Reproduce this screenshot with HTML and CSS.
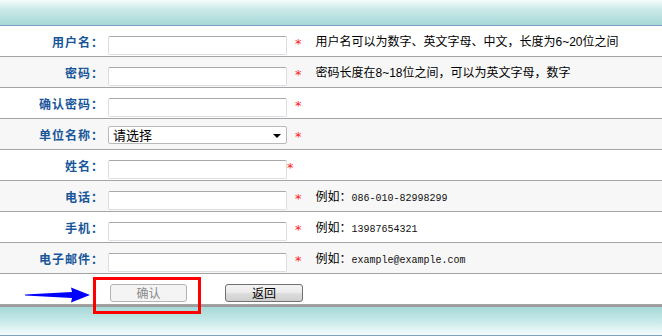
FILE: index.html
```html
<!DOCTYPE html>
<html>

<head>
    <title>用户注册</title>
    <link rel="stylesheet" href="styles.css">
</head>

<body>
    <div class="top"></div>
    <form class="form">
        <div class="row">
            <label class="name">用户名：</label>
            <input type="text" class="text" />
            <span class="req">*</span>
            <span class="tip">用户名可以为数字、英文字母、中文，长度为6~20位之间</span>
        </div>
        <div class="row">
            <label class="name">密码：</label>
            <input type="password" class="text" />
            <span class="req">*</span>
            <span class="tip">密码长度在8~18位之间，可以为英文字母，数字</span>
        </div>
        <div class="row">
            <label class="name">确认密码：</label>
            <input type="password" class="text" />
            <span class="req">*</span>
        </div>
        <div class="row">
            <label class="name">单位名称：</label>
            <span class="pick">
                <select class="unit">
                    <option>请选择</option>
                </select>
            </span>
            <span class="req">*</span>
        </div>
        <div class="row">
            <label class="name">姓名：</label>
            <input type="text" class="text" />
            <span class="req tight">*</span>
        </div>
        <div class="row">
            <label class="name">电话：</label>
            <input type="text" class="text" />
            <span class="req">*</span>
            <span class="tip">例如：<span class="mono">086-010-82998299</span></span>
        </div>
        <div class="row">
            <label class="name">手机：</label>
            <input type="text" class="text" />
            <span class="req">*</span>
            <span class="tip">例如：<span class="mono">13987654321</span></span>
        </div>
        <div class="row">
            <label class="name">电子邮件：</label>
            <input type="text" class="text" />
            <span class="req">*</span>
            <span class="tip">例如：<span class="mono">example@example.com</span></span>
        </div>
        <div class="row act">
            <!-- 提示箭头 -->
            <svg class="arrow" width="66" height="16" viewBox="0 0 66 16">
                <polygon points="0,7.4 47,5 46,0.6 65,8 46,15.4 47,11 0,8.6" fill="#0000ff" />
            </svg>
            <button type="button" class="btn off" disabled>确认</button>
            <button type="button" class="btn">返回</button>
            <!-- 标记框 -->
            <div class="mark"></div>
        </div>
    </form>
    <div class="bottom"></div>
</body>

</html>
```

FILE: styles.css
```css
body {
    margin: 0;
    font-family: "Liberation Sans", "Noto Sans CJK SC", sans-serif;
    font-size: 12px;
    color: #000;
    background: #fff;
}

.top {
    height: 25px;
    background: linear-gradient(#f6fcfc, #cdeaea 35%, #a6d8d8);
    border-bottom: 1px solid #7fa2c3;
}

.row {
    display: flex;
    align-items: flex-start;
    height: 30px;
    border-bottom: 1px solid #a4a4a4;
    background: #fff;
}

.row:nth-child(even) {
    background: #f7f7f7;
}

.name {
    width: 104px;
    margin-top: 9px;
    line-height: 14px;
    text-align: right;
    font-family: "Noto Sans CJK SC", sans-serif;
    font-weight: bold;
    letter-spacing: 1px;
    color: #17569a;
}

.text {
    box-sizing: border-box;
    width: 179px;
    height: 19px;
    margin: 10px 0 0 4px;
    padding: 0 3px;
    border: 1px solid #dcdde3;
    border-top-color: #a9a9a9;
    border-radius: 2px;
    background: #fff;
    font-size: 12px;
}

.pick {
    position: relative;
    margin: 7px 0 0 4px;
}

.unit {
    appearance: none;
    box-sizing: border-box;
    width: 179px;
    height: 18px;
    padding: 0 0 0 4px;
    border: 1px solid #b9b9b9;
    border-radius: 2px;
    background: #fff;
    font-family: "Noto Sans CJK SC", sans-serif;
    font-size: 13px;
    line-height: 16px;
    color: #000;
}

.pick:after {
    content: "";
    position: absolute;
    right: 6px;
    top: 8px;
    border-left: 4px solid transparent;
    border-right: 4px solid transparent;
    border-top: 4px solid #000;
}

.req {
    margin: 11px 0 0 8px;
    line-height: 13px;
    font-family: "DejaVu Sans", sans-serif;
    font-size: 13px;
    color: #ff1a1a;
}

.req.tight {
    margin-left: 0;
}

.tip {
    margin: 9px 0 0 14px;
    line-height: 14px;
}

.mono {
    font-family: "Liberation Mono", monospace;
    font-size: 10px;
    color: #111;
}

.act {
    position: relative;
    padding-left: 110px;
    gap: 38px;
}

.btn {
    box-sizing: border-box;
    width: 78px;
    height: 18px;
    margin-top: 10px;
    padding: 0;
    border: 1px solid #707070;
    border-radius: 3px;
    background: linear-gradient(#f3f3f3, #ececec 45%, #dcdcdc 55%, #cfcfcf);
    font-family: "Noto Sans CJK SC", sans-serif;
    font-size: 12px;
    line-height: 16px;
    color: #000;
}

.btn.off {
    width: 77px;
    border-color: #b3b3b3;
    background: #f4f4f4;
    color: #8a8a8a;
}

.arrow {
    position: absolute;
    left: 25px;
    top: 13px;
}

.mark {
    position: absolute;
    left: 93px;
    top: 3px;
    width: 102px;
    height: 31px;
    border: 3px solid #ff0000;
    z-index: 1;
}

.bottom {
    height: 28px;
    border-top: 2px solid #9c9c9c;
    border-bottom: 1px solid #7fa2c3;
    background: linear-gradient(#a6d8d8, #c8e9e9 50%, #f4fcfc);
}
```
